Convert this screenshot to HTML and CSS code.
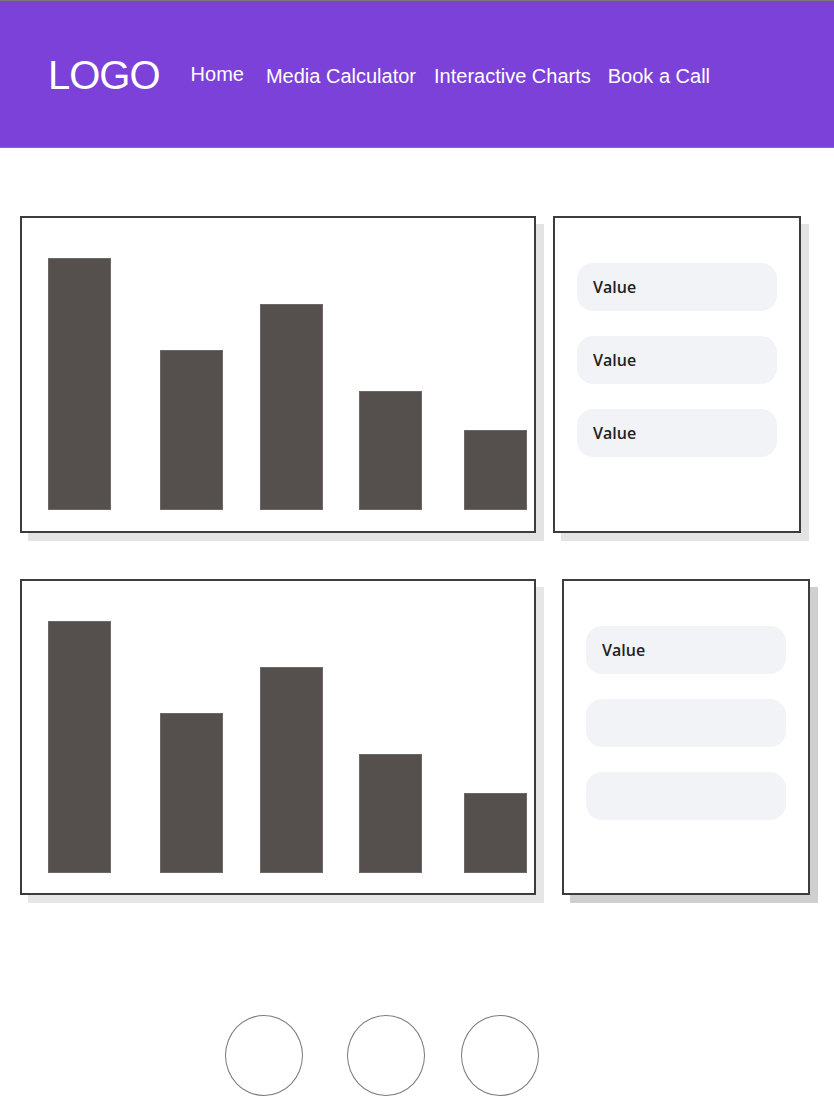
FILE: index.html
```html
<!DOCTYPE html>
<html lang="en">
<head>
<meta charset="utf-8">
<title>Dashboard</title>
<link rel="stylesheet" href="styles.css">
</head>
<body>
<header class="site-header">
  <div class="logo">LOGO</div>
  <nav class="nav">
    <a class="nav-link home" href="#">Home</a>
    <a class="nav-link media" href="#">Media Calculator</a>
    <a class="nav-link charts" href="#">Interactive Charts</a>
    <a class="nav-link" href="#">Book a Call</a>
  </nav>
</header>

<main class="main">
  <section class="row row-one">
    <div class="chart-card">
      <div class="bars">
        <div class="bar b1" style="height:252px"></div>
        <div class="bar b2" style="height:160px"></div>
        <div class="bar b3" style="height:206px"></div>
        <div class="bar b4" style="height:119px"></div>
        <div class="bar b5" style="height:80px"></div>
      </div>
    </div>
    <div class="side-card">
      <div class="pill">Value</div>
      <div class="pill">Value</div>
      <div class="pill">Value</div>
    </div>
  </section>

  <section class="row row-two">
    <div class="chart-card">
      <div class="bars">
        <div class="bar b1" style="height:252px"></div>
        <div class="bar b2" style="height:160px"></div>
        <div class="bar b3" style="height:206px"></div>
        <div class="bar b4" style="height:119px"></div>
        <div class="bar b5" style="height:80px"></div>
      </div>
    </div>
    <div class="side-card">
      <div class="pill">Value</div>
      <div class="pill"></div>
      <div class="pill"></div>
    </div>
  </section>

  <div class="circles">
    <div class="circle"></div>
    <div class="circle c2"></div>
    <div class="circle c3"></div>
  </div>
</main>
</body>
</html>
```

FILE: styles.css
```css
* { box-sizing: border-box; }

html, body {
  margin: 0;
  padding: 0;
  background: #ffffff;
}

body {
  font-family: "Liberation Sans", Arial, sans-serif;
  color: #222;
}

.site-header {
  height: 148px;
  background: #7b41d9;
  border-top: 1px solid #7a7a7a;
  border-bottom: 1px solid #7a7a7a;
  display: flex;
  align-items: flex-start;
  padding-left: 48px;
}

.logo {
  font-size: 40px;
  line-height: 1;
  letter-spacing: -1px;
  color: #ffffff;
  margin-top: 54px;
}

.nav {
  display: flex;
  align-items: flex-start;
  margin-left: 31px;
}

.nav-link {
  color: #ffffff;
  text-decoration: none;
  font-size: 20px;
  line-height: 1;
  margin-top: 65px;
  margin-right: 16px;
}

.nav-link.home {
  margin-top: 63px;
  margin-right: 22px;
}

.nav-link.media { margin-right: 18px; }
.nav-link.charts { margin-right: 17px; }

.main {
  padding: 68px 0 0 20px;
}

.row {
  display: flex;
  align-items: flex-start;
}

.row-one { height: 317px; gap: 17px; }
.row-two { height: 316px; gap: 26px; margin-top: 46px; }

.chart-card {
  width: 516px;
  height: 100%;
  border: 2px solid #3c3c3c;
  background: #fff;
  box-shadow: 8px 8px 0 #e3e3e3;
}

.row-two .chart-card { box-shadow: 8px 8px 0 #e6e6e6; }

.bars {
  display: flex;
  align-items: flex-end;
  height: 292px;
  padding-left: 26px;
}

.bar {
  width: 63px;
  background: #554f4e;
  border: 1px solid #6c6868;
}

.b2 { margin-left: 49px; }
.b3 { margin-left: 37px; }
.b4 { margin-left: 36px; }
.b5 { margin-left: 42px; }

.side-card {
  width: 248px;
  height: 100%;
  border: 2px solid #3c3c3c;
  background: #fff;
  box-shadow: 8px 8px 0 #e3e3e3;
  padding: 45px 22px 0;
  display: flex;
  flex-direction: column;
  gap: 25px;
}

.row-two .side-card { box-shadow: 8px 8px 0 #cfcfcf; }

.pill {
  width: 200px;
  height: 48px;
  border-radius: 16px;
  background: #f2f3f7;
  padding-left: 16px;
  font-family: "Open Sans", "Noto Sans", sans-serif;
  font-weight: 600;
  font-size: 16px;
  line-height: 48px;
  color: #222;
}

.circles {
  display: flex;
  margin-top: 120px;
  padding-left: 205px;
}

.circle {
  width: 78px;
  height: 81px;
  border: 1px solid #7a7a7a;
  border-radius: 50%;
}

.c2 { margin-left: 44px; }
.c3 { margin-left: 36px; }
```
